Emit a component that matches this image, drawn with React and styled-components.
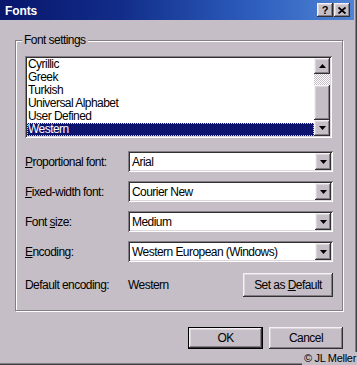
import React from "react";
import styled, { createGlobalStyle, css } from "styled-components";

const face = "#c6bec6";

const GlobalStyle = createGlobalStyle`
  html, body { margin: 0; padding: 0; background: ${face}; }
  #root { width: 357px; height: 365px; }
`;

const raised = css`
  background: ${face};
  box-shadow: inset -1px -1px #303030, inset 1px 1px #f4f0f4,
    inset -2px -2px #857d85, inset 2px 2px #dcd6dc;
`;

const sunken = css`
  box-shadow: inset 1px 1px #857d85, inset -1px -1px #ffffff,
    inset 2px 2px #303030, inset -2px -2px #dcd6dc;
`;

const Window = styled.div`
  position: relative;
  width: 357px;
  height: 365px;
  box-sizing: border-box;
  overflow: hidden;
  background: ${face};
  display: flex;
  flex-direction: column;
  font-family: "Liberation Sans", Arial, sans-serif;
  font-size: 12px;
  letter-spacing: -0.55px;
  color: #000;
  box-shadow: inset -1px -1px #404040, inset -2px -2px #857d85;
`;

const TitleBar = styled.div`
  height: 20px;
  margin-right: 3px;
  display: flex;
  align-items: center;
  padding: 0 4px 0 5px;
  background: linear-gradient(to right, #08166c 0%, #122e8a 35%, #2c5cbc 70%, #4f84d4 100%);
`;

const Title = styled.div`
  flex: 1;
  color: #fff;
  font-weight: bold;
  font-size: 12px;
  letter-spacing: -0.1px;
  padding-top: 1px;
`;

const CaptionButtons = styled.div`
  display: flex;
  gap: 1px;
`;

const CaptionButton = styled.div`
  ${raised};
  width: 16px;
  height: 14px;
  display: flex;
  align-items: center;
  justify-content: center;
  font-weight: bold;
  font-size: 11px;
  letter-spacing: 0;
  line-height: 14px;
`;

const Body = styled.div`
  display: flex;
  flex-direction: column;
  padding: 20px 14px 0 15px;
`;

const Group = styled.div`
  position: relative;
  height: 271px;
  box-sizing: border-box;
  border: 1px solid #857d85;
  box-shadow: inset 1px 1px #fff, 1px 1px #fff;
  padding: 15px 9px 0 9px;
  display: flex;
  flex-direction: column;
`;

const Legend = styled.div`
  position: absolute;
  top: -8px;
  left: 6px;
  padding: 0 2px;
  background: ${face};
  line-height: 14px;
`;

const ListBox = styled.div`
  ${sunken};
  width: 307px;
  height: 82px;
  box-sizing: border-box;
  padding: 2px;
  background: #fff;
  display: flex;
`;

const ListItems = styled.div`
  flex: 1;
  display: flex;
  flex-direction: column;
  overflow: hidden;
`;

const ListItem = styled.div`
  height: 13px;
  line-height: 13px;
  padding-left: 1px;
  white-space: nowrap;
  ${(p) =>
    p.$selected &&
    css`
      background: #0c1470;
      color: #fff;
      outline: 1px dotted #d8d8a0;
      outline-offset: -1px;
    `}
`;

const ScrollBar = styled.div`
  width: 16px;
  display: flex;
  flex-direction: column;
`;

const ArrowButton = styled.div`
  ${raised};
  flex: none;
  width: ${(p) => p.$w || 16}px;
  height: ${(p) => p.$h || 16}px;
  display: flex;
  align-items: center;
  justify-content: center;
`;

const Track = styled.div`
  flex: 0 0 11px;
  background: repeating-conic-gradient(#ffffff 0 25%, ${face} 0 50%) 0 0 / 2px 2px;
`;

const Thumb = styled.div`
  ${raised};
  flex: 1;
`;

const Rows = styled.div`
  display: flex;
  flex-direction: column;
  gap: 9px;
  margin-top: 13px;
`;

const FormRow = styled.div`
  display: flex;
  align-items: center;
  height: ${(p) => p.$h || 21}px;
  margin-top: ${(p) => p.$mt || 0}px;
`;

const Label = styled.div`
  width: 103px;
  flex: none;
  white-space: nowrap;
`;

const Value = styled.div`
  flex: 1;
`;

const Combo = styled.div`
  ${sunken};
  width: 205px;
  height: 21px;
  box-sizing: border-box;
  padding: 2px;
  background: #fff;
  display: flex;
  align-items: center;
`;

const ComboText = styled.div`
  flex: 1;
  padding-left: 2px;
  white-space: nowrap;
`;

const PushButton = styled.div`
  ${raised};
  width: ${(p) => p.$w}px;
  height: ${(p) => p.$h || 22}px;
  box-sizing: border-box;
  display: flex;
  align-items: center;
  justify-content: center;
  white-space: nowrap;
  ${(p) =>
    p.$default &&
    css`
      border: 1px solid #000;
    `}
`;

const ButtonRow = styled.div`
  display: flex;
  justify-content: flex-end;
  gap: 6px;
  margin-top: 16px;
`;

const Copyright = styled.div`
  margin-top: 3px;
  align-self: flex-end;
  font-size: 11px;
  line-height: 13px;
  letter-spacing: -0.3px;
  padding: 0 1px 0 2px;
  background: ${face};
  position: relative;
`;

const Arrow = ({ up }) => (
  <svg width="7" height="4" viewBox="0 0 7 4">
    <polygon points={up ? "3.5,0 7,4 0,4" : "0,0 7,0 3.5,4"} fill="#000" />
  </svg>
);

const CloseGlyph = () => (
  <svg width="8" height="7" viewBox="0 0 8 7">
    <path d="M0.5 0.5 L7.5 6.5 M7.5 0.5 L0.5 6.5" stroke="#000" strokeWidth="1.8" />
  </svg>
);

const encodings = ["Cyrillic", "Greek", "Turkish", "Universal Alphabet", "User Defined", "Western"];

const ComboBox = ({ value }) => (
  <Combo>
    <ComboText>{value}</ComboText>
    <ArrowButton $w={16} $h={17}>
      <Arrow />
    </ArrowButton>
  </Combo>
);

export default function App() {
  return (
    <>
      <GlobalStyle />
      <Window>
        <TitleBar>
          <Title>Fonts</Title>
          <CaptionButtons>
            <CaptionButton>?</CaptionButton>
            <CaptionButton>
              <CloseGlyph />
            </CaptionButton>
          </CaptionButtons>
        </TitleBar>
        <Body>
          <Group>
            <Legend>Font settings</Legend>
            <ListBox>
              <ListItems>
                {encodings.map((e) => (
                  <ListItem key={e} $selected={e === "Western"}>
                    {e}
                  </ListItem>
                ))}
              </ListItems>
              <ScrollBar>
                <ArrowButton>
                  <Arrow up />
                </ArrowButton>
                <Track />
                <Thumb />
                <ArrowButton>
                  <Arrow />
                </ArrowButton>
              </ScrollBar>
            </ListBox>
            <Rows>
              <FormRow>
                <Label>
                  <u>P</u>roportional font:
                </Label>
                <ComboBox value="Arial" />
              </FormRow>
              <FormRow>
                <Label>
                  <u>F</u>ixed-width font:
                </Label>
                <ComboBox value="Courier New" />
              </FormRow>
              <FormRow>
                <Label>
                  Font <u>s</u>ize:
                </Label>
                <ComboBox value="Medium" />
              </FormRow>
              <FormRow>
                <Label>
                  <u>E</u>ncoding:
                </Label>
                <ComboBox value="Western European (Windows)" />
              </FormRow>
            </Rows>
            <FormRow $h={24} $mt={11}>
              <Label>Default encoding:</Label>
              <Value>Western</Value>
              <PushButton $w={90} $h={24}>
                Set as&nbsp;<u>D</u>efault
              </PushButton>
            </FormRow>
          </Group>
          <ButtonRow>
            <PushButton $w={75} $default>
              OK
            </PushButton>
            <PushButton $w={74}>Cancel</PushButton>
          </ButtonRow>
        </Body>
        <Copyright>© JL Meller</Copyright>
      </Window>
    </>
  );
}
